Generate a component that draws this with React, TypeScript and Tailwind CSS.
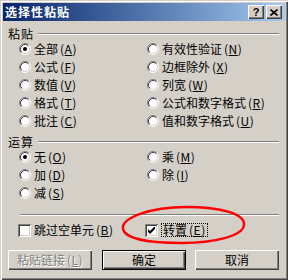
import type { ReactNode } from "react";

const raised =
  "bg-[#d4d0c8] shadow-[inset_1px_1px_#fff,inset_-1px_-1px_#404040,inset_-2px_-2px_#808080]";

function Radio({ checked }: { checked?: boolean }) {
  return (
    <svg width="12" height="12" viewBox="0 0 12 12" className="shrink-0">
      <circle cx="6" cy="6" r="5" fill="#fff" />
      <path d="M2.11 9.89A5.5 5.5 0 0 1 9.89 2.11" stroke="#808080" fill="none" />
      <path d="M9.89 2.11A5.5 5.5 0 0 1 2.11 9.89" stroke="#fff" fill="none" />
      <path d="M2.82 9.18A4.5 4.5 0 0 1 9.18 2.82" stroke="#404040" fill="none" />
      <path d="M9.18 2.82A4.5 4.5 0 0 1 2.82 9.18" stroke="#d4d0c8" fill="none" />
      {checked && <circle cx="6" cy="6" r="2" fill="#000" />}
    </svg>
  );
}

function Checkbox({ checked }: { checked?: boolean }) {
  return (
    <div className="flex h-[13px] w-[13px] shrink-0 items-center justify-center bg-white shadow-[inset_1px_1px_#808080,inset_-1px_-1px_#fff,inset_2px_2px_#404040,inset_-2px_-2px_#d4d0c8]">
      {checked && (
        <svg width="7" height="7" viewBox="0 0 7 7">
          <path d="M0 2v3l2 2 5-5V-1L2 4z" fill="#000" />
        </svg>
      )}
    </div>
  );
}

function Label({ text, k }: { text: string; k: string }) {
  return (
    <span className="whitespace-nowrap">
      {text}
      <span className="ml-[2px] tracking-[0.5px]">
        (<u className="underline-offset-1">{k}</u>)
      </span>
    </span>
  );
}

function Option({ text, k, checked }: { text: string; k: string; checked?: boolean }) {
  return (
    <div className="flex h-[18px] items-center gap-[3px]">
      <Radio checked={checked} />
      <Label text={text} k={k} />
    </div>
  );
}

function GroupHeader({ children }: { children: ReactNode }) {
  return (
    <div className="flex h-[13px] items-center pl-[5px] pr-[6px]">
      <span className="leading-[13px] tracking-[1px]">{children}</span>
      <div className="ml-[4px] h-[2px] flex-1 border-t border-t-[#808080] border-b border-b-white" />
    </div>
  );
}

function Button({ children, main, disabled }: { children: ReactNode; main?: boolean; disabled?: boolean }) {
  return (
    <div
      className={
        main
          ? "flex h-[20px] w-[84px] items-center justify-center border border-black bg-[#d4d0c8] shadow-[inset_1px_1px_#fff,inset_-1px_-1px_#404040,inset_-2px_-2px_#808080]"
          : "flex h-[20px] w-[84px] items-center justify-center " + raised
      }
    >
      <span className={disabled ? "text-[#808080] [text-shadow:1px_1px_0_#fff]" : "text-black"}>{children}</span>
    </div>
  );
}

export default function App() {
  return (
    <div className="relative flex h-[280px] w-[288px] flex-col bg-[#d4d0c8] p-[3px] font-['Noto_Sans_CJK_SC','Noto_Sans',sans-serif] text-[12px] leading-[14px] text-black shadow-[inset_1px_1px_#d4d0c8,inset_2px_2px_#fff,inset_-1px_-1px_#404040,inset_-2px_-2px_#808080]">
      {/* Title bar */}
      <div className="flex h-[18px] items-center bg-gradient-to-r from-[#0a246a] to-[#a6caf0] pl-[2px] pr-[3px]">
        <span className="flex-1 text-[12px] font-bold tracking-[1px] text-white">选择性粘贴</span>
        <div className="flex gap-[2px]">
          <div className="flex h-[14px] w-[16px] items-center justify-center bg-[#d4d0c8] shadow-[inset_1px_1px_#fff,inset_-1px_-1px_#404040,inset_-2px_-2px_#808080]">
            <span className="font-['Liberation_Sans',sans-serif] text-[11px] leading-[11px] font-bold">?</span>
          </div>
          <div className="flex h-[14px] w-[16px] items-center justify-center bg-[#d4d0c8] shadow-[inset_1px_1px_#fff,inset_-1px_-1px_#404040,inset_-2px_-2px_#808080]">
            <svg width="8" height="7" viewBox="0 0 8 7">
              <path d="M0.5 0.5L7.5 6.5M7.5 0.5L0.5 6.5" stroke="#000" strokeWidth="1.6" />
            </svg>
          </div>
        </div>
      </div>

      {/* 粘贴 */}
      <div className="mt-[6px]">
        <GroupHeader>粘贴</GroupHeader>
      </div>
      <div className="grid grid-cols-[128px_1fr] pl-[16px]">
        <div className="flex flex-col">
          <Option text="全部" k="A" checked />
          <Option text="公式" k="F" />
          <Option text="数值" k="V" />
          <Option text="格式" k="T" />
          <Option text="批注" k="C" />
        </div>
        <div className="flex flex-col">
          <Option text="有效性验证" k="N" />
          <Option text="边框除外" k="X" />
          <Option text="列宽" k="W" />
          <Option text="公式和数字格式" k="R" />
          <Option text="值和数字格式" k="U" />
        </div>
      </div>

      {/* 运算 */}
      <div className="mt-[5px]">
        <GroupHeader>运算</GroupHeader>
      </div>
      <div className="grid grid-cols-[128px_1fr] pl-[16px]">
        <div className="flex flex-col">
          <Option text="无" k="O" checked />
          <Option text="加" k="D" />
          <Option text="减" k="S" />
        </div>
        <div className="flex flex-col">
          <Option text="乘" k="M" />
          <Option text="除" k="I" />
        </div>
      </div>

      {/* separator */}
      <div className="mt-[12px] ml-[17px] mr-[6px] h-[2px] border-t border-t-[#808080] border-b border-b-white" />

      {/* checkboxes */}
      <div className="mt-[7px] grid h-[14px] grid-cols-[127px_1fr] items-center pl-[15px]">
        <div className="flex items-center gap-[3px]">
          <Checkbox />
          <Label text="跳过空单元" k="B" />
        </div>
        <div className="flex items-center gap-[3px]">
          <Checkbox checked />
          <div className="border border-dotted border-black px-[1px] leading-[12px]">
            <Label text="转置" k="E" />
          </div>
        </div>
      </div>

      {/* buttons */}
      <div className="mt-[13px] flex pl-[5px]">
        <Button disabled>
          <Label text="粘贴链接" k="L" />
        </Button>
        <div className="ml-[10px]">
          <Button main>确定</Button>
        </div>
        <div className="ml-[9px]">
          <Button>取消</Button>
        </div>
      </div>

      {/* red annotation */}
      <svg className="pointer-events-none absolute left-0 top-0" width="288" height="280" viewBox="0 0 288 280">
        <path
          d="M123 229C121 218 150 207 186 207C222 207 245 214 244 225C243 236 214 243 182 243C150 243 125 239 123 229Z"
          fill="none"
          stroke="#ff0000"
          strokeWidth="2.5"
        />
      </svg>
    </div>
  );
}
